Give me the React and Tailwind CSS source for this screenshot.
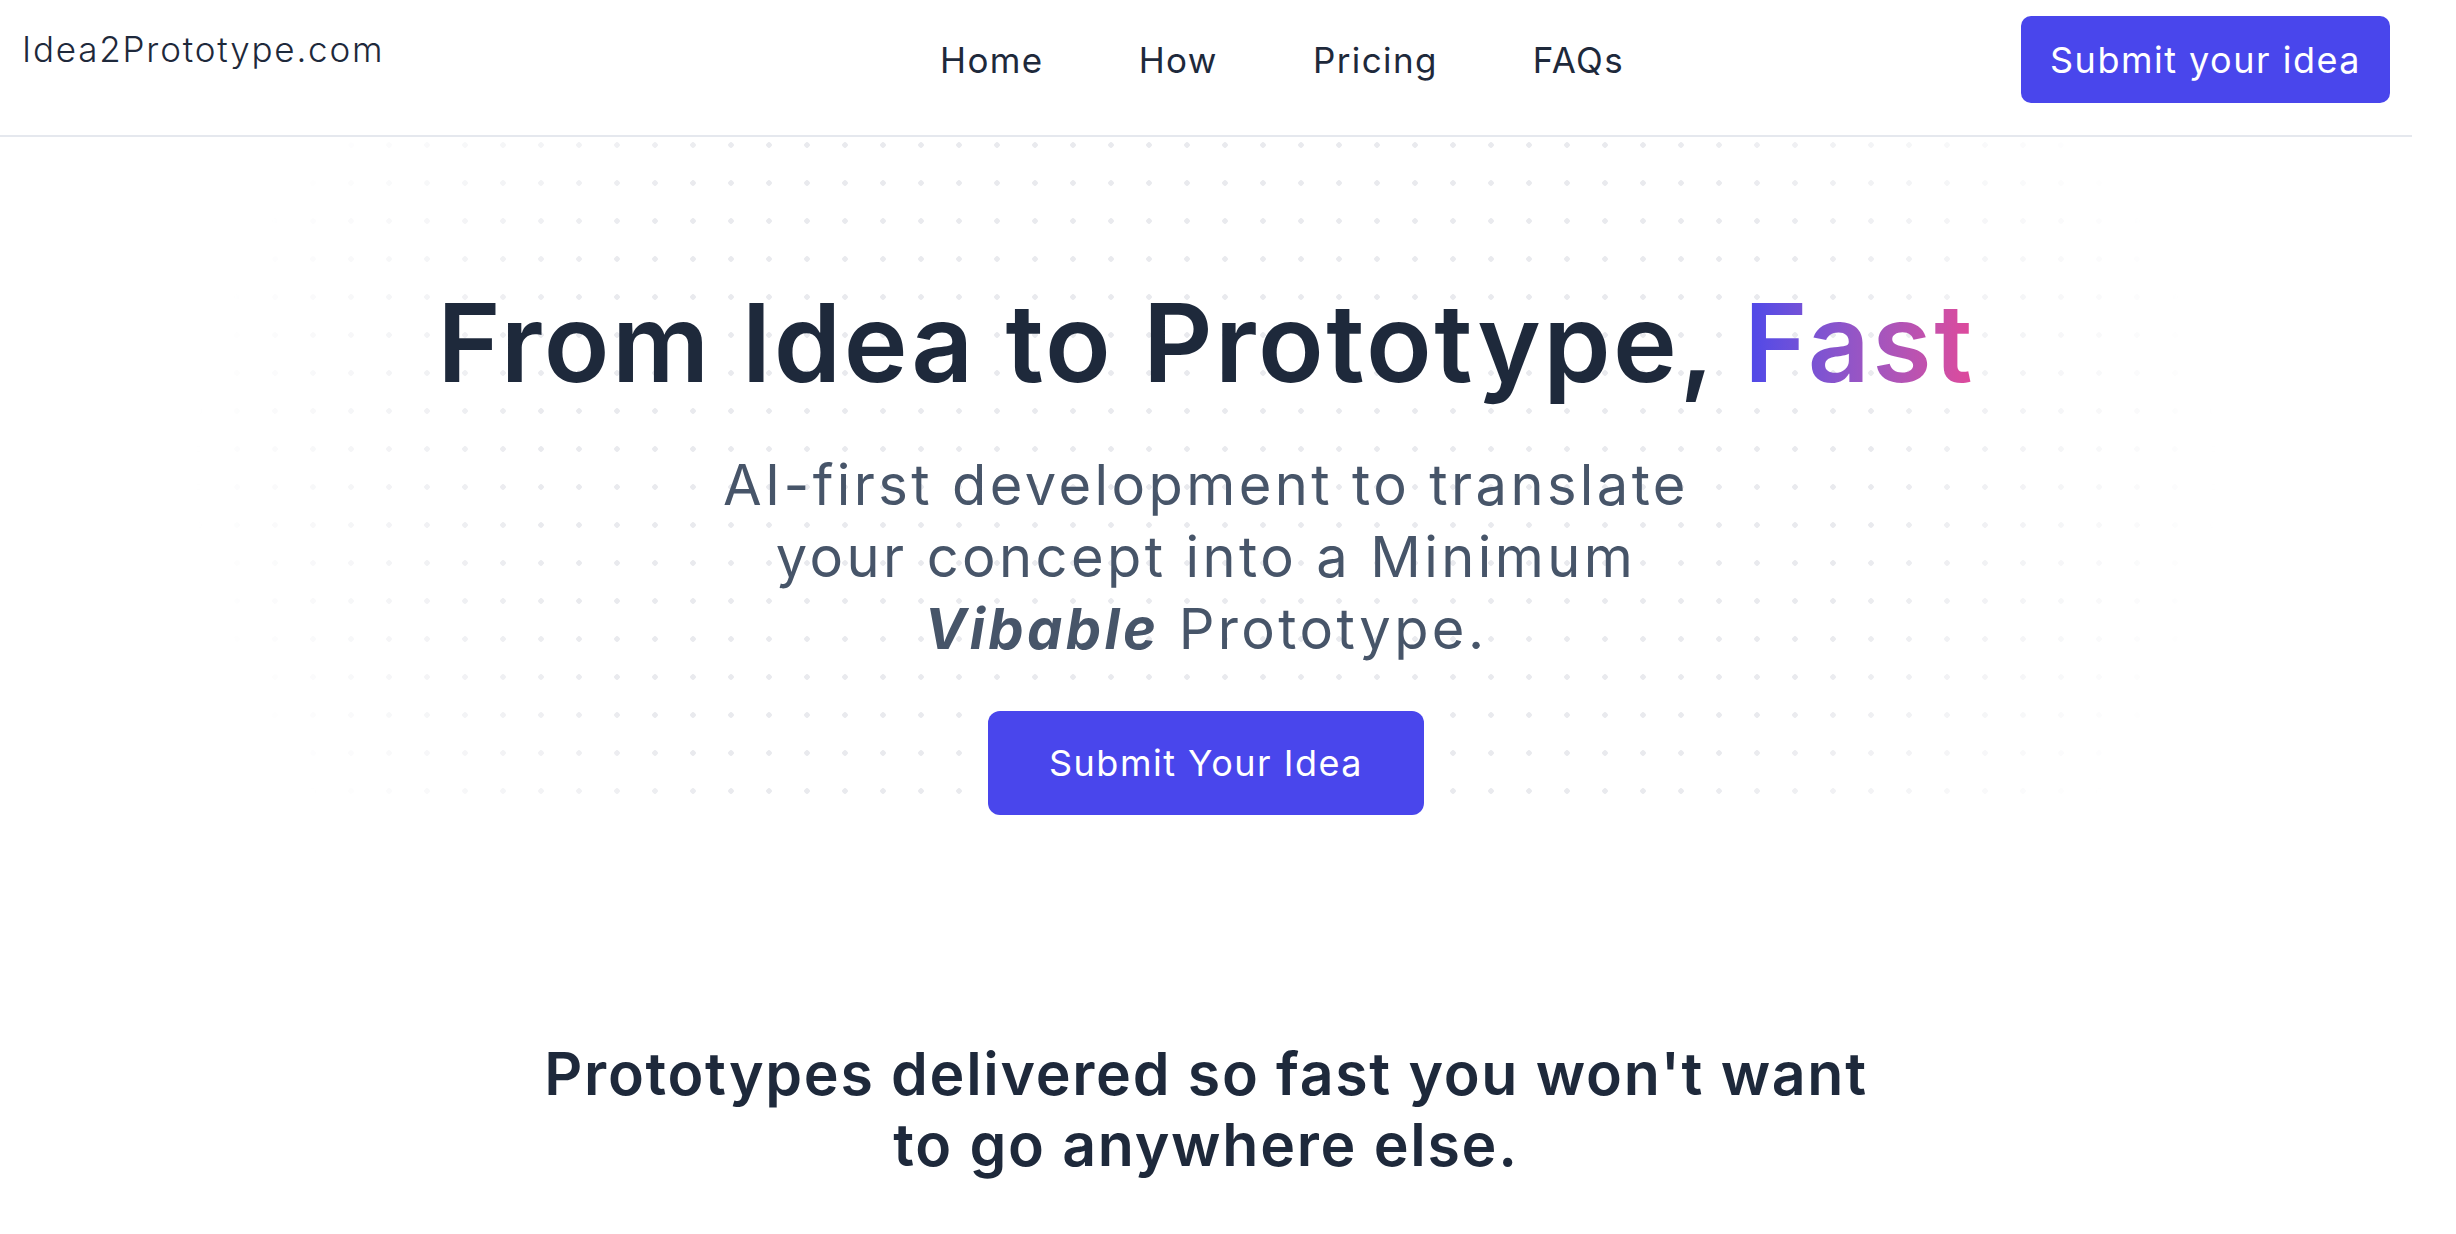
export default function App() {
  return (
    <div className="min-h-screen bg-white font-['Inter','Noto_Sans',sans-serif] text-[#1e293b]">
      <div className="w-[2412px]">
        {/* Header */}
        <header className="flex h-[137px] items-start border-b-2 border-[#e5e8ee] px-[22px]">
          <a className="w-[918px] pt-[24px] text-[35px] leading-[50px] font-light tracking-[1.8px]">Idea2Prototype.com</a>
          <nav className="flex h-[120px] items-center gap-[95px] text-[35px] tracking-[1.4px]">
            <a>Home</a>
            <a>How</a>
            <a>Pricing</a>
            <a>FAQs</a>
          </nav>
          <button className="ml-auto mt-[16px] h-[87px] w-[369px] rounded-[10px] bg-[#4946ec] text-[36px] tracking-[1.5px] text-white">
            Submit your idea
          </button>
        </header>

        {/* Hero */}
        <section className="relative flex flex-col items-center pt-[146px]">
          <div className="pointer-events-none absolute inset-x-0 top-0 h-[675px] bg-[radial-gradient(circle,#e9eaee_2.5px,transparent_3px)] bg-[size:38px_38px] bg-[position:-10px_27px] [mask-image:radial-gradient(ellipse_50%_120%_at_50%_50%,black_55%,transparent_84%)] [-webkit-mask-image:radial-gradient(ellipse_50%_120%_at_50%_50%,black_55%,transparent_84%)]" />
          <h1 className="relative text-[108px] leading-[120px] font-semibold tracking-[2.5px]">
            From Idea to Prototype,{" "}
            <span className="bg-linear-to-r from-[#4b47ea] to-[#e0489a] bg-clip-text text-transparent">Fast</span>
          </h1>
          <p className="relative mt-[46px] text-center text-[56px] leading-[72px] tracking-[3.4px] text-[#475569]">
            AI-first development to translate
            <br />
            your concept into a Minimum
            <br />
            <b className="font-bold italic">Vibable</b> Prototype.
          </p>
          <a className="relative mt-[46px] flex h-[104px] w-[436px] items-center justify-center rounded-[12px] bg-[#4946ec] text-[36px] tracking-[1.5px] text-white">
            Submit Your Idea
          </a>
        </section>

        {/* Second block */}
        <section className="flex flex-col items-center pt-[223px]">
          <h2 className="text-center text-[59px] leading-[71px] font-semibold tracking-[1.7px]">
            Prototypes delivered so fast you won't want
            <br />
            to go anywhere else.
          </h2>
        </section>
      </div>
    </div>
  );
}
